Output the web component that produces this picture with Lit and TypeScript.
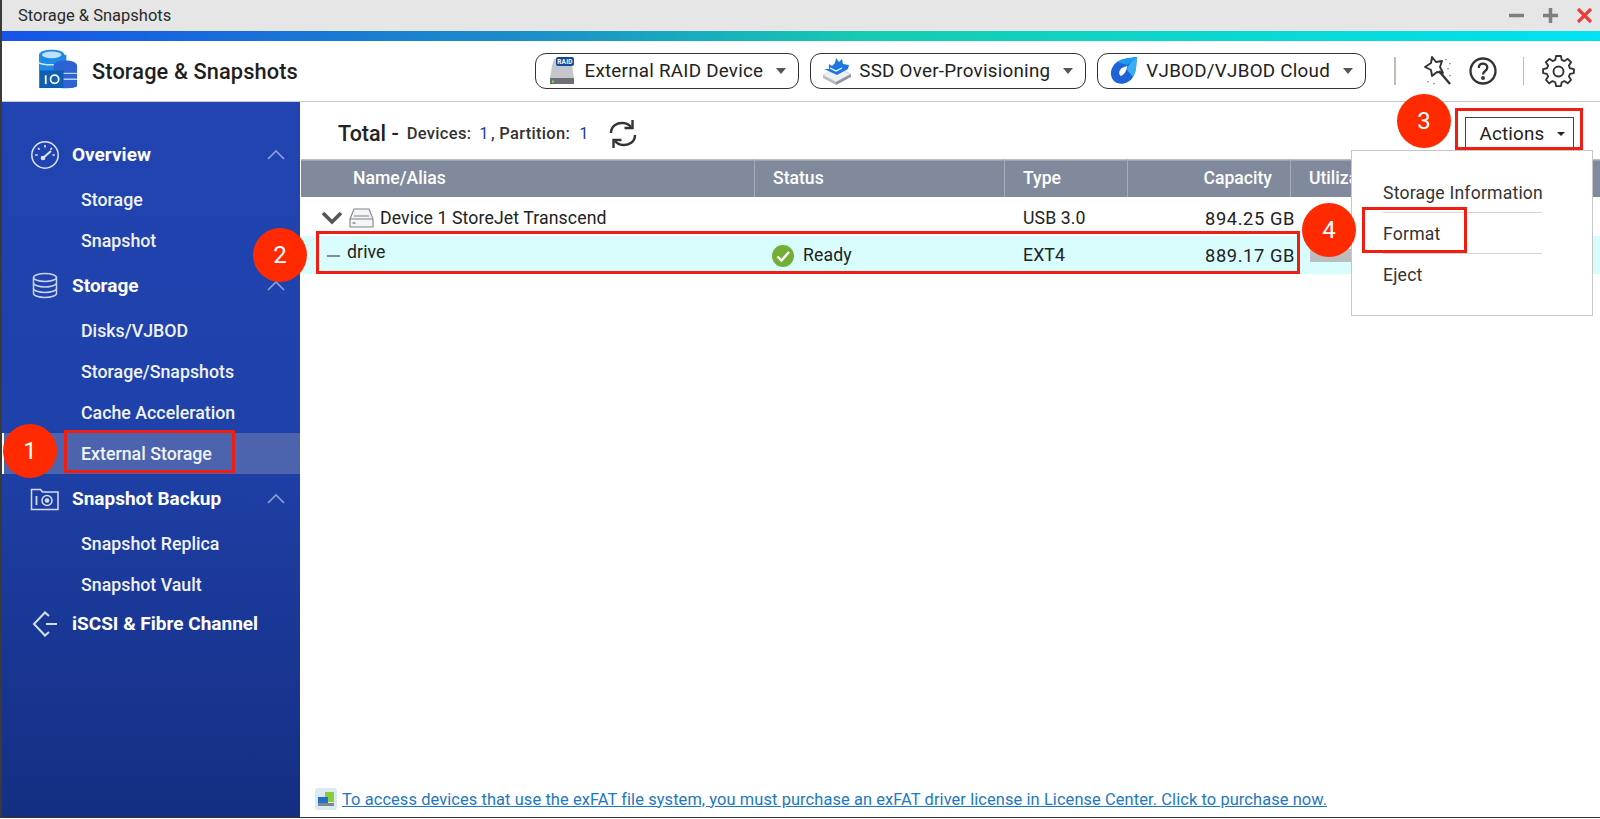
import { LitElement, html, css } from "lit";
import { customElement } from "lit/decorators.js";

const chevUp = html`<svg class="chev" width="18" height="11" viewBox="0 0 18 11"><path d="M1 10 L9 2 L17 10" fill="none" stroke="rgba(255,255,255,.5)" stroke-width="1.6"/></svg>`;

const icons: Record<string, unknown> = {
  gauge: html`<svg width="30" height="30" viewBox="0 0 30 30" fill="none" stroke="#dfe5f6" stroke-width="1.5"><circle cx="15" cy="15" r="13.2"/><path d="M15 5v2.4M8 8l1.6 1.6M22 8l-1.6 1.6M5.2 15h2.4M24.8 15h-2.4" stroke-width="1.6"/><path d="M13 18 L21 11" stroke-width="2"/><circle cx="13" cy="18" r="1.6" fill="#dfe5f6"/></svg>`,
  db: html`<svg width="28" height="27" viewBox="0 0 28 27" fill="none" stroke="#c9d3ee" stroke-width="1.5"><ellipse cx="14" cy="5.5" rx="11.5" ry="4"/><path d="M2.5 5.5v16c0 2.2 5.2 4 11.5 4s11.5-1.8 11.5-4v-16"/><path d="M2.5 11c0 2.2 5.2 4 11.5 4s11.5-1.8 11.5-4M2.5 16.5c0 2.2 5.2 4 11.5 4s11.5-1.8 11.5-4"/></svg>`,
  snap: html`<svg width="30" height="24" viewBox="0 0 30 24" fill="none" stroke="#d5dcf2" stroke-width="1.5"><path d="M1.5 22.5V2.5h9l2 2.5h15.5v17.5z"/><path d="M6.5 9v9" stroke-width="1.8"/><circle cx="17" cy="13.5" r="5"/><circle cx="17" cy="13.5" r="1.6" fill="#d5dcf2"/></svg>`,
  iscsi: html`<svg width="26" height="26" viewBox="0 0 26 26" fill="none" stroke="#d5dcf2" stroke-width="2"><path d="M17 5 L13 1.5 L2 13 L13 24.5 L17 21"/><path d="M14 13h11"/></svg>`,
};

const groups = [
  { name: "Overview", icon: "gauge", chev: true, subs: ["Storage", "Snapshot"] },
  { name: "Storage", icon: "db", chev: true, subs: ["Disks/VJBOD", "Storage/Snapshots", "Cache Acceleration", "External Storage"] },
  { name: "Snapshot Backup", icon: "snap", chev: true, subs: ["Snapshot Replica", "Snapshot Vault"] },
  { name: "iSCSI & Fibre Channel", icon: "iscsi", chev: false, subs: [] as string[] },
];

const raidIcon = html`<svg width="30" height="30" viewBox="0 0 30 30"><path d="M5 10 L7 3 H24 L27 22 H3 Z" fill="#c3c6cc"/><path d="M3 22h24v6H3z" fill="#6d7077"/><rect x="5" y="24.5" width="2" height="2" fill="#7fe03a"/><rect x="9" y="1" width="18" height="9" rx="2" fill="#15479f"/><text x="18" y="8" font-size="6.5" font-family="Roboto" font-weight="700" fill="#fff" text-anchor="middle">RAID</text></svg>`;
const ssdIcon = html`<svg width="30" height="30" viewBox="0 0 30 30"><path d="M1 19 L16 12 L29 18 L14 26 Z" fill="#eef0f2" stroke="#c9ccd2" stroke-width=".6"/><path d="M1 19 L14 26 V29 L1 22 Z" fill="#b6bbc2"/><path d="M14 26 L29 18 V21 L14 29 Z" fill="#8f959e"/><path d="M2 13 L7 13 L7 8 L10 10 L13 7 L14 2 L17 6 L20 3 L21 8 L27 9 L26 13 L15 19 Z" fill="#1a78e0"/><path d="M8 12 L14 15 L20 12" stroke="#fff" stroke-width="1.2" fill="none"/></svg>`;
const cloudIcon = html`<svg width="30" height="30" viewBox="0 0 30 30"><path d="M28 1 C27 8 28 14 24 21 C20 28 10 30 5 25 C0 20 1 11 8 6 C14 2 21 2 28 1 Z" fill="#1c63d8"/><path d="M28 1 C27 8 28 14 24 21 L18 14 C19 9 22 5 28 1 Z" fill="#39aef5"/><path d="M8 6 C14 2 21 2 28 1 L18 9 Z" fill="#1c9bf0"/><path d="M18.5 10 C17 15 16 18 12 20 C9 18 10 14 13 12 C15 11 16.5 10.5 18.5 10 Z" fill="#fff"/></svg>`;

const marks = [
  { x: 64, y: 430, w: 171, h: 43 },
  { x: 316, y: 231, w: 984, h: 43 },
  { x: 1455, y: 108, w: 128, h: 42 },
  { x: 1362, y: 207, w: 105, h: 46 },
];
const bubbles = [
  { n: "1", x: 30, y: 451 },
  { n: "2", x: 280, y: 255 },
  { n: "3", x: 1424, y: 121 },
  { n: "4", x: 1329, y: 230 },
];

@customElement("app-root")
export class AppRoot extends LitElement {
  static styles = css`
    :host { display: block; width: 1600px; height: 819px; position: relative; overflow: hidden; background: #fff;
      font-family: Roboto, "Liberation Sans", sans-serif; color: #222; }
    .win { height: 818px; display: flex; flex-direction: column; box-sizing: border-box; border-left: 2px solid #3a3a3a; border-bottom: 1px solid #333; }
    .titlebar { height: 31px; flex: none; background: #e6e6e6; display: flex; align-items: center; padding: 0 7px 0 16px; font-size: 16.5px; color: #2a2a2a; }
    .titlebar .t { flex: 1; }
    .wc { display: flex; gap: 17px; align-items: center; }
    .grad { height: 10px; flex: none; background: linear-gradient(90deg, #1554e8 0%, #1b8fc8 33%, #15cdb0 55%, #00e2f2 100%); }
    .hdr { height: 61px; flex: none; box-sizing: border-box; border-bottom: 1.5px solid #c9c9c9; display: flex; align-items: center; padding: 0 25px 0 37px; background: #fff; }
    .logo { margin-top: -4px; }
    .app { font-size: 21.8px; font-weight: 500; color: #1f1f1f; margin-left: 13px; flex: 1; letter-spacing: .1px; }
    .drops { display: flex; gap: 11px; }
    .drop { height: 36px; box-sizing: border-box; border: 1.3px solid #333; border-radius: 11px; display: flex; align-items: center; padding: 0 12px 0 11px; font-size: 18.8px; color: #222; letter-spacing: .25px; white-space: nowrap; }
    .drop .lbl { margin-left: 7px; }
    .drop .caret { width: 0; height: 0; border-left: 5.5px solid transparent; border-right: 5.5px solid transparent; border-top: 6px solid #555; margin-left: 13px; }
    .vsep { width: 1.5px; height: 28px; background: #bdbdb5; margin: 0 26px 0 28px; }
    .vsep.b { margin: 0 18px 0 26px; }
    .tools { display: flex; align-items: center; }
    .help { margin-left: 15px; }
    .body { flex: 1; display: flex; min-height: 0; }
    .side { width: 298px; flex: none; background: linear-gradient(180deg, #2144b2 0%, #1f41aa 45%, #142e82 100%); padding-top: 28px; box-sizing: border-box; color: #fff; }
    .group { height: 49px; display: flex; align-items: center; padding-left: 28px; font-size: 19px; font-weight: 700; }
    .group.last { margin-top: -6px; }
    .group .gi { width: 30px; display: flex; justify-content: center; margin-right: 12px; }
    .group .name { flex: 1; }
    .chev { margin-right: 15px; }
    .sub { height: 41px; display: flex; align-items: center; padding-left: 79px; font-size: 17.8px; font-weight: 500; color: #f0f3fb; }
    .sub.sel { background: #4c63ae; box-shadow: inset 2px 0 0 #fff; }
    .main { flex: 1; min-width: 0; display: flex; flex-direction: column; padding-left: 1px; position: relative; }
    .total { height: 57px; flex: none; display: flex; align-items: center; padding: 6px 26px 0 37px; box-sizing: border-box; }
    .total b { font-size: 21.5px; font-weight: 500; color: #222; margin-right: 8px; }
    .total .meta { font-size: 16.5px; font-weight: 500; color: #333; letter-spacing: .3px; }
    .total .num { color: #1b3f94; font-weight: 400; margin: 0 2px 0 8px; }
    .total .num.e { margin-left: 9px; }
    .total .rf { margin-left: 17px; display: flex; }
    .actions { margin-left: auto; width: 109px; height: 33px; box-sizing: border-box; border: 1.5px solid #444; display: flex; align-items: center; justify-content: center; font-size: 18.8px; color: #222; align-self: flex-start; margin-top: 9px; padding-left: 6px; letter-spacing: .2px; }
    .actions i { width: 0; height: 0; border-left: 4px solid transparent; border-right: 4px solid transparent; border-top: 4.5px solid #222; margin-left: 13px; }
    .row { display: grid; grid-template-columns: 454px 250px 123px 163px 1fr; align-items: center; }
    .th { height: 38px; background: #808a9c; color: #fff; font-size: 17.6px; font-weight: 500; box-shadow: inset 0 1.5px 0 #b8bec9; }
    .th > div { height: 100%; display: flex; align-items: center; box-sizing: border-box; border-right: 1px solid #a3abb8; padding-left: 18px; }
    .th > div:first-child { padding-left: 52px; }
    .th > div.r { justify-content: flex-end; padding: 0 18px 0 0; }
    .th > div:last-child { border-right: 0; }
    .tr { font-size: 17.7px; color: #222; letter-spacing: .1px; }
    .tr > div { display: flex; align-items: center; padding-left: 18px; }
    .tr .r { justify-content: flex-end; padding: 0; margin-right: -4px; font-size: 18.3px; letter-spacing: .6px; }
    .d1 { height: 39px; padding-top: 3px; box-sizing: border-box; }
    .d1 > div:first-child { padding-left: 20px; gap: 6px; }
    .d2 { height: 38px; background: #d9fcfc; }
    .d2 > div:first-child { padding-left: 26px; }
    .dash { width: 13px; height: 1.5px; background: #8c8c8c; margin: 2px 7px 0 0; }
    .dname { margin-top: -7px; }
    .ok { margin: 2px 9px 0 -1px; }
    .bar { width: 60px; height: 13px; background: #bdbdbd; margin-left: 1px; }
    .spacer { flex: 1; }
    .foot { height: 36px; flex: none; display: flex; align-items: center; padding-left: 14px; gap: 5px; }
    .foot a { color: #1b78c4; font-size: 16.4px; text-decoration: underline; letter-spacing: .1px; }
    .menu { position: absolute; left: 1351px; top: 150px; width: 242px; height: 166px; box-sizing: border-box; background: #fff; border: 1.5px solid #c6c6c6; padding: 21px 50px 0 31px; font-size: 17.6px; color: #333; letter-spacing: .2px; white-space: nowrap; }
    .menu div { height: 41px; display: flex; align-items: center; border-bottom: 1.5px solid #d4d4d4; box-sizing: border-box; padding-top: 1px; }
    .menu div:last-child { border-bottom: 0; }
    .mark { position: absolute; box-sizing: border-box; border: 3.5px solid #f01e12; }
    .bubble { position: absolute; width: 54px; height: 54px; margin: -27px 0 0 -27px; border-radius: 50%; background: #ff2a00; color: #fff; font-size: 24px; display: flex; align-items: center; justify-content: center; }
  `;

  render() {
    return html`
      <div class="win">
        <div class="titlebar">
          <div class="t">Storage &amp; Snapshots</div>
          <div class="wc">
            <svg width="17" height="17" viewBox="0 0 17 17"><path d="M1 8.5h15" stroke="#7d7f83" stroke-width="3.5"/></svg>
            <svg width="17" height="17" viewBox="0 0 17 17"><path d="M1 8.5h15M8.5 1v15" stroke="#7d7f83" stroke-width="3.5"/></svg>
            <svg width="17" height="17" viewBox="0 0 17 17"><path d="M2 2l13 13M15 2L2 15" stroke="#e8413c" stroke-width="3.2"/></svg>
          </div>
        </div>
        <div class="grad"></div>
        <div class="hdr">
          <svg class="logo" width="40" height="40" viewBox="0 0 41 41">
            <path d="M0 6v34h28V6z" fill="#1f8ae6"/>
            <path d="M0 6c0-7 26-7 26 0s-26 7-26 0z" fill="#1f8ae6"/>
            <ellipse cx="13" cy="6" rx="10" ry="3.5" fill="#bfe0fb"/>
            <path d="M0 14c4 3 20 3 26 0" stroke="#cfe6fb" stroke-width="1.5" fill="none"/>
            <path d="M15 17c0-7 24-7 24 0v21c0 3-24 3-24 0z" fill="#2c62d2"/>
            <path d="M25 25h14M25 31h14" stroke="#b9d2f3" stroke-width="1.5"/>
            <rect x="1" y="22" width="24" height="18" fill="#0f5fb4"/>
            <rect x="6" y="27" width="1.8" height="9" fill="#fff"/>
            <circle cx="16" cy="31" r="4.2" fill="none" stroke="#fff" stroke-width="1.8"/>
          </svg>
          <div class="app">Storage &amp; Snapshots</div>
          <div class="drops">
            <div class="drop">${raidIcon}<span class="lbl">External RAID Device</span><span class="caret"></span></div>
            <div class="drop">${ssdIcon}<span class="lbl">SSD Over-Provisioning</span><span class="caret"></span></div>
            <div class="drop">${cloudIcon}<span class="lbl">VJBOD/VJBOD Cloud</span><span class="caret"></span></div>
          </div>
          <div class="vsep"></div>
          <div class="tools">
            <svg width="32" height="32" viewBox="0 0 32 32" fill="none" stroke="#333" stroke-width="1.9" stroke-linejoin="round"><path d="M10 2 L14 7 L20 6 L18 12 L21 18 L15 17 L10 21 L9 15 L3 12 L9 8 Z"/><path d="M17 16 L28 29" stroke-width="2.3"/><path d="M24 4v1.2M28 8v1.2M26 13v1.2M6 26v1.2M12 28v1.2M28 20v1.2" stroke="#888" stroke-width="1.6"/></svg>
            <svg class="help" width="28" height="28" viewBox="0 0 28 28" fill="none" stroke="#333" stroke-width="2.3"><circle cx="14" cy="14" r="12.5"/><path d="M9.8 11c0-6 8.5-5.5 8.5-.5 0 3.5-4.3 3.5-4.3 7"/><circle cx="14" cy="21" r=".8" fill="#333"/></svg>
            <div class="vsep b"></div>
            <svg width="33" height="33" viewBox="0 0 33 33" fill="none" stroke="#333" stroke-width="1.9" stroke-linejoin="round"><circle cx="16.5" cy="16.5" r="5"/><path d="M14 2h5l.8 4 2.8 1.2 3.4-2.3 3.5 3.5-2.3 3.4L28.4 14.6l4 .8v4.2l-4 .8-1.2 2.8 2.3 3.4-3.5 3.5-3.4-2.3-2.8 1.2-.8 4h-5l-.8-4-2.8-1.2-3.4 2.3-3.5-3.5 2.3-3.4-1.2-2.800-4-.8v-4.2l4-.8 1.2-2.800-2.300-3.400 3.500-3.500 3.400 2.300L13.200 6z" transform="translate(.5 -.9) scale(.97)"/></svg>
          </div>
        </div>
        <div class="body">
          <div class="side">
            ${groups.map((g, gi) => html`
              <div class="group ${gi === 3 ? "last" : ""}">
                <span class="gi">${icons[g.icon]}</span><span class="name">${g.name}</span>${g.chev ? chevUp : ""}
              </div>
              ${g.subs.map((s) => html`<div class="sub ${s === "External Storage" ? "sel" : ""}">${s}</div>`)}
            `)}
          </div>
          <div class="main">
            <div class="total">
              <b>Total -</b>
              <span class="meta">Devices:<span class="num">1</span>, Partition:<span class="num e">1</span></span>
              <span class="rf"><svg width="30" height="32" viewBox="0 0 30 32" fill="none" stroke="#333" stroke-width="2.4"><path d="M3 15C3 8 9 4.5 15 5c3 .2 6 1.5 8 4"/><path d="M24.5 2v8h-8"/><path d="M27 17c0 7-6 10.5-12 10-3-.2-6-1.5-8-4"/><path d="M5.5 30v-8h8"/></svg></span>
              <div class="actions">Actions<i></i></div>
            </div>
            <div class="row th">
              <div>Name/Alias</div><div>Status</div><div>Type</div><div class="r">Capacity</div><div>Utilization</div>
            </div>
            <div class="row tr d1">
              <div>
                <svg width="22" height="14" viewBox="0 0 22 14"><path d="M2 2 L11 11 L20 2" fill="none" stroke="#555" stroke-width="3.6"/></svg>
                <svg width="25" height="22" viewBox="0 0 25 22" fill="#f4f5f6" stroke="#7f8388" stroke-width="1.1"><path d="M1 12 L5 2 H20 L24 12 V20 H1 Z"/><path d="M1 12 H24 M5 9 H20" /><path d="M3.5 16h3" stroke-width="1.4"/></svg>
                <span>Device 1 StoreJet Transcend</span>
              </div>
              <div></div><div>USB 3.0</div><div class="r">894.25 GB</div><div></div>
            </div>
            <div class="row tr d2">
              <div><span class="dash"></span><span class="dname">drive</span></div>
              <div>
                <svg class="ok" width="22" height="22" viewBox="0 0 22 22"><circle cx="11" cy="11" r="11" fill="#73ae36"/><path d="M5.5 11.5 L9.5 15.5 L17 7" fill="none" stroke="#fff" stroke-width="2.4"/></svg>
                <span>Ready</span>
              </div>
              <div>EXT4</div><div class="r">889.17 GB</div><div><span class="bar"></span></div>
            </div>
            <div class="spacer"></div>
            <div class="foot">
              <svg width="22" height="22" viewBox="0 0 22 22"><rect width="22" height="22" rx="3" fill="#dbeaf0"/><path d="M10 4h9v10h-9z" fill="#8ccc3a"/><path d="M3 9h10v6H3z" fill="#1f6fd0"/><path d="M3 15h16v3H3z" fill="#7e858c"/></svg>
              <a>To access devices that use the exFAT file system, you must purchase an exFAT driver license in License Center. Click to purchase now.</a>
            </div>
          </div>
        </div>
      </div>
      <div class="menu"><div>Storage Information</div><div>Format</div><div>Eject</div></div>
      ${marks.map((m) => html`<div class="mark" style="left:${m.x}px;top:${m.y}px;width:${m.w}px;height:${m.h}px"></div>`)}
      ${bubbles.map((b) => html`<div class="bubble" style="left:${b.x}px;top:${b.y}px">${b.n}</div>`)}
    `;
  }
}
